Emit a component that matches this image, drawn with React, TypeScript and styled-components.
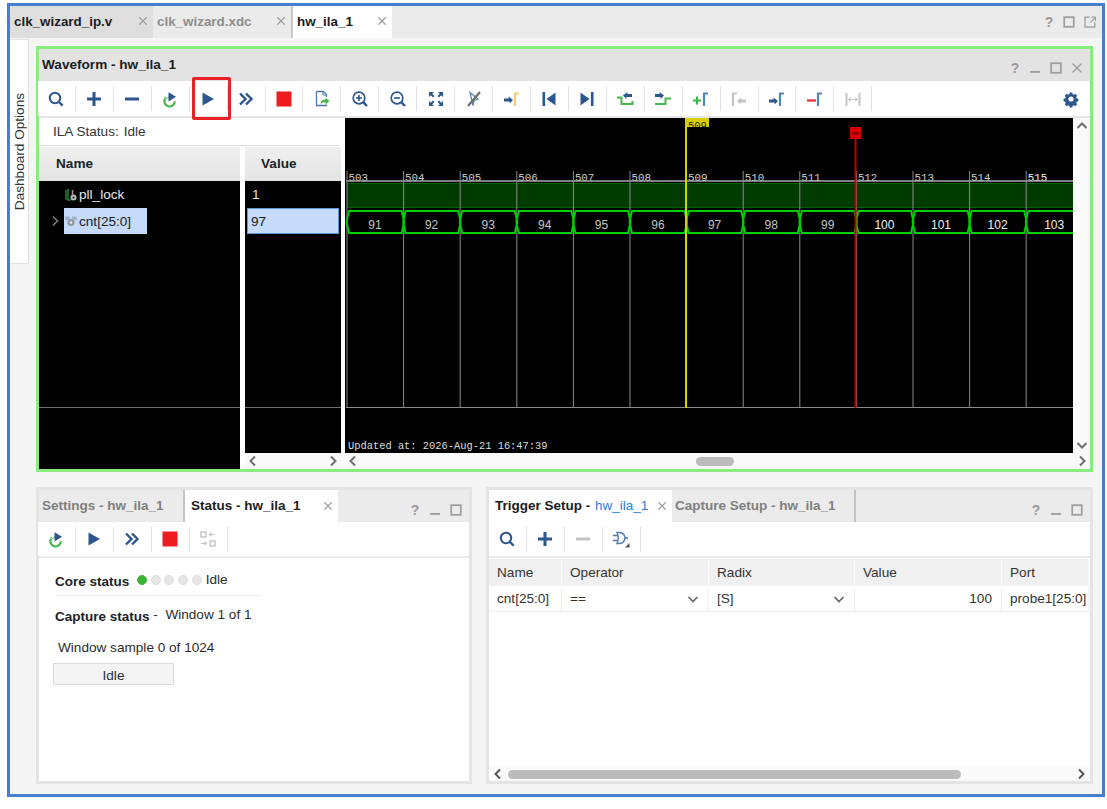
import React from "react";
import styled, { createGlobalStyle } from "styled-components";

const Global = createGlobalStyle`
  html, body { margin: 0; padding: 0; background: #fff; }
  body { font-family: "Liberation Sans", Arial, sans-serif; font-size: 13.6px; color: #2b2b2b; }
  * { box-sizing: border-box; }
`;

const BLUE = "#2b568f";
const GREEN = "#45b649";
const GREY = "#c4c4c4";
const MID = "#4f87b8";

const Frame = styled.div`
  margin: 3px 0 0 7px;
  width: 1098px;
  height: 794px;
  border: 3px solid #4a7dd0;
  background: #f5f5f5;
  display: flex;
  flex-direction: column;
`;
const TabBar = styled.div`
  height: 32px;
  background: #ebebeb;
  display: flex;
  align-items: stretch;
  flex: none;
`;
const DocTab = styled.div<{ $w: number; $state: "dim" | "muted" | "active" }>`
  width: ${(p) => p.$w}px;
  display: flex;
  align-items: center;
  padding: 0 5px 2px 4px;
  justify-content: space-between;
  font-weight: bold;
  font-size: 13.4px;
  background: ${(p) => (p.$state === "active" ? "#fff" : p.$state === "dim" ? "#dedede" : "#ebebeb")};
  color: ${(p) => (p.$state === "muted" ? "#8d8d8d" : "#1c1c1c")};
  border-left: ${(p) => (p.$state === "active" ? "2px solid #c9c9c9" : "0")};
`;
const Spring = styled.div`
  flex: 1;
`;
const WinGroup = styled.div<{ $gap: number; $pad: number; $top?: number }>`
  display: flex;
  align-items: center;
  gap: ${(p) => p.$gap}px;
  padding-right: ${(p) => p.$pad}px;
  padding-top: ${(p) => p.$top ?? 0}px;
`;
const Help = styled.span`
  color: #9a9a9a;
  font-weight: bold;
  font-size: 14px;
  width: 10px;
  text-align: center;
`;
const Body = styled.div`
  flex: 1;
  display: flex;
  min-height: 0;
`;
const Rail = styled.div`
  width: 19px;
  padding-top: 1px;
  flex: none;
`;
const RailTab = styled.div`
  height: 225px;
  background: #fff;
  border: 1px solid #e2e2e2;
  border-left: 0;
  display: flex;
  align-items: center;
  justify-content: center;
  padding-left: 1px;
`;
const RailText = styled.span`
  writing-mode: vertical-rl;
  transform: rotate(180deg);
  font-size: 13.6px;
  color: #333;
  white-space: nowrap;
`;
const Work = styled.div`
  flex: 1;
  padding: 8px 9px 0 7px;
  display: flex;
  flex-direction: column;
  gap: 15px;
`;
const WavePanel = styled.section`
  height: 426px;
  border: 3px solid #88ec7e;
  background: #e6e6e6;
  display: flex;
  flex-direction: column;
  flex: none;
`;
const PanelHead = styled.header`
  height: 32px;
  background: #e3e3e3;
  display: flex;
  align-items: center;
  justify-content: space-between;
  padding: 0 0 0 3px;
  flex: none;
`;
const PanelTitle = styled.h2`
  margin: 0 0 2px;
  font-size: 13.6px;
  font-weight: bold;
  color: #1c1c1c;
`;
const Toolbar = styled.div<{ $shift?: boolean; $h?: number }>`
  height: ${(p) => p.$h ?? 35}px;
  background: #fff;
  display: flex;
  align-items: center;
  flex: none;
  margin-left: ${(p) => (p.$shift ? -1 : 0)}px;
`;
const ToolCell = styled.div<{ $mark?: boolean; $open?: boolean }>`
  position: relative;
  width: 37.93px;
  height: 25px;
  display: flex;
  align-items: center;
  justify-content: center;
  flex: none;
  border-right: ${(p) => (p.$open ? "0" : "1px solid #e2e2e2")};
  ${(p) =>
    p.$mark
      ? `&::after {
          content: "";
          box-sizing: border-box;
          position: absolute;
          left: 2px;
          top: -9px;
          width: 39px;
          height: 43px;
          border: 3px solid #ea2127;
          border-radius: 2px;
        }`
      : ""}
`;
const ToolSpring = styled.div`
  flex: 1;
`;
const GearSlot = styled.div`
  padding-right: 10px;
  display: flex;
`;
const WaveContent = styled.div`
  flex: 1;
  margin-top: 2px;
  display: flex;
  background: #fff;
  min-height: 0;
`;
const LeftSide = styled.div`
  width: 302px;
  display: flex;
  flex-direction: column;
  flex: none;
  gap: 2px;
`;
const IlaRow = styled.div`
  height: 27px;
  padding-left: 14px;
  display: flex;
  align-items: center;
  gap: 5px;
  font-size: 13.6px;
  color: #333;
  flex: none;
  margin-right: 2px;
  box-shadow: 0 1px 0 #e0e0e0;
`;
const Columns = styled.div`
  flex: 1;
  display: flex;
  gap: 5px;
  min-height: 0;
`;
const NameCol = styled.div`
  width: 201px;
  display: flex;
  flex-direction: column;
`;
const ValueCol = styled.div`
  width: 96px;
  display: flex;
  flex-direction: column;
`;
const ColHead = styled.div<{ $pad: number }>`
  height: 34px;
  flex: none;
  background: linear-gradient(#efefef, #e3e3e3);
  display: flex;
  align-items: center;
  padding: 0 0 1px ${(p) => p.$pad}px;
  font-weight: bold;
  font-size: 13.6px;
  color: #222;
`;
const BlackBody = styled.div`
  flex: 1;
  background: #000;
  display: flex;
  flex-direction: column;
  min-height: 0;
`;
const SigRow = styled.div<{ $h: number }>`
  height: ${(p) => p.$h}px;
  display: flex;
  align-items: center;
  color: #e8e8e8;
  font-size: 13.6px;
  flex: none;
`;
const Caret = styled.span`
  width: 25px;
  display: flex;
  justify-content: flex-end;
  padding-right: 3px;
  flex: none;
`;
const SigCell = styled.span<{ $sel?: boolean }>`
  display: flex;
  align-items: center;
  gap: 0;
  height: 26px;
  width: 83px;
  background: ${(p) => (p.$sel ? "#c6dbfa" : "transparent")};
  color: ${(p) => (p.$sel ? "#1a1a1a" : "#e8e8e8")};
`;
const ValCell = styled.span<{ $sel?: boolean }>`
  display: flex;
  align-items: center;
  margin-left: 2px;
  width: 92px;
  height: 26px;
  padding-left: ${(p) => (p.$sel ? 3 : 5)}px;
  background: ${(p) => (p.$sel ? "#c6dbfa" : "transparent")};
  border: ${(p) => (p.$sel ? "1px solid #5b9bd5" : "0")};
  color: ${(p) => (p.$sel ? "#1a1a1a" : "#e8e8e8")};
`;
const Rule = styled.div<{ $mt: number }>`
  height: 1px;
  background: #6e6e6e;
  margin-top: ${(p) => p.$mt}px;
  flex: none;
`;
const HScroll = styled.div<{ $h?: number; $pad?: string }>`
  height: ${(p) => p.$h ?? 16}px;
  flex: none;
  background: #fafafa;
  display: flex;
  align-items: center;
  padding: ${(p) => p.$pad ?? "0 2px"};
`;
const Thumb = styled.div<{ $w: number; $ml: number; $h?: number }>`
  width: ${(p) => p.$w}px;
  height: ${(p) => p.$h ?? 9}px;
  margin-left: ${(p) => p.$ml}px;
  background: #bcbcbc;
  border-radius: 5px;
`;
const RightPush = styled.div`
  margin-left: auto;
  display: flex;
`;
const WaveSide = styled.div`
  flex: 1;
  margin-left: 4px;
  display: flex;
  flex-direction: column;
  min-width: 0;
`;
const WaveTop = styled.div`
  height: 335px;
  display: flex;
  flex: none;
`;
const Canvas = styled.svg`
  width: 728px;
  height: 335px;
  display: block;
  flex: none;
`;
const VScroll = styled.div`
  flex: 1;
  background: #fafafa;
  display: flex;
  flex-direction: column;
  justify-content: space-between;
  align-items: center;
  padding: 2px 0;
`;
const BottomRow = styled.div`
  height: 297px;
  display: flex;
  gap: 14px;
  flex: none;
`;
const Dock = styled.section<{ $w: number }>`
  width: ${(p) => p.$w}px;
  border: 3px solid #e4e4e4;
  background: #ebebeb;
  display: flex;
  flex-direction: column;
  flex: none;
`;
const DockTabs = styled.div`
  height: 32px;
  display: flex;
  align-items: stretch;
  flex: none;
`;
const DockTab = styled.div<{ $w: number; $active?: boolean; $rule?: boolean }>`
  width: ${(p) => p.$w}px;
  display: flex;
  align-items: center;
  padding: 0 5px 2px ${(p) => (p.$active ? 6 : 3)}px;
  gap: 4px;
  font-weight: bold;
  font-size: 13.5px;
  white-space: nowrap;
  background: ${(p) => (p.$active ? "#fff" : "#ebebeb")};
  color: ${(p) => (p.$active ? "#1c1c1c" : "#7f7f7f")};
  border-right: ${(p) => (p.$rule ? "2px solid #c4c4c4" : "0")};
  flex: none;
`;
const TabLink = styled.span`
  color: #2a7de1;
  font-weight: normal;
  margin-left: 1px;
`;
const TabClose = styled.span`
  margin-left: auto;
  display: flex;
  padding-top: 2px;
`;
const DockBody = styled.div`
  flex: 1;
  background: #fff;
  margin-top: 2px;
  min-height: 0;
  display: flex;
  flex-direction: column;
`;
const StatusBody = styled(DockBody)`
  padding: 12px 0 0 16px;
`;
const StatusLine = styled.div`
  display: flex;
  align-items: center;
  height: 19px;
  font-size: 13.6px;
`;
const StrongLabel = styled.b`
  font-size: 13.5px;
  padding-top: 3px;
  color: #222;
`;
const Dots = styled.span`
  display: flex;
  gap: 3.6px;
  margin: 0 4px 0 8px;
`;
const Dot = styled.i<{ $on?: boolean }>`
  width: 10px;
  height: 10px;
  border-radius: 50%;
  background: ${(p) => (p.$on ? "#3cb43c" : "#e6e6e6")};
  border: 1px solid ${(p) => (p.$on ? "#3cb43c" : "#dcdcdc")};
`;
const ThinRule = styled.div`
  width: 205px;
  height: 1px;
  background: #ebebeb;
  margin: 6px 0 0 1px;
`;
const CaptureLine = styled(StatusLine)`
  margin-top: 9px;
`;
const SampleLine = styled.div`
  margin: 16px 0 0 3px;
  font-size: 13.6px;
`;
const IdleButton = styled.div`
  width: 121px;
  height: 22px;
  margin: 8px 0 0 -2px;
  background: #f4f4f4;
  border: 1px solid #dcdcdc;
  display: flex;
  align-items: center;
  justify-content: center;
  padding-top: 3px;
  font-size: 13.6px;
`;
const GridTable = styled.div`
  display: grid;
  grid-template-columns: 73px 147px 146px 147px 87px;
  margin-top: 1px;
  flex: none;
`;
const Th = styled.div`
  height: 27px;
  background: #f0f0f0;
  border-right: 1px solid #fafafa;
  padding: 0 0 0 8px;
  display: flex;
  align-items: center;
  font-size: 13.6px;
  color: #333;
`;
const Td = styled.div<{ $right?: boolean }>`
  height: 26px;
  border-right: 1px solid #f0f0f0;
  border-bottom: 1px solid #efefef;
  padding: 0 9px 0 8px;
  display: flex;
  align-items: center;
  justify-content: ${(p) => (p.$right ? "flex-end" : "space-between")};
  font-size: 13.6px;
  color: #333;
  white-space: nowrap;
`;
const TableFill = styled.div`
  flex: 1;
`;

const Svg = styled.svg`
  display: block;
  flex: none;
`;

const Ic = ({ s = 18, children }: { s?: number; children: React.ReactNode }) => (
  <Svg width={s} height={s} viewBox="0 0 18 18" fill="none">
    {children}
  </Svg>
);

const Search = () => (
  <Ic>
    <circle cx="8" cy="8" r="5.2" stroke={BLUE} strokeWidth="2" />
    <path d="M12 12l3.6 3.6" stroke={BLUE} strokeWidth="2.4" />
  </Ic>
);
const Plus = ({ c = BLUE }: { c?: string }) => (
  <Ic>
    <path d="M9 2v14M2 9h14" stroke={c} strokeWidth="3" />
  </Ic>
);
const Minus = ({ c = BLUE }: { c?: string }) => (
  <Ic>
    <path d="M2 9h14" stroke={c} strokeWidth="3" />
  </Ic>
);
const Refresh = () => (
  <Ic>
    <path d="M4.2 8.5a5.2 5.2 0 1 0 9.6 2.7" stroke={GREEN} strokeWidth="2.2" />
    <path d="M3.4 7l2.8 1.6L8 6.4" stroke={GREEN} strokeWidth="1" />
    <path d="M7.5 2.2l7.5 4.6-7.5 4.6z" fill={BLUE} />
  </Ic>
);
const Play = () => (
  <Ic>
    <path d="M3.5 2.5l11.5 6.5-11.5 6.5z" fill={BLUE} />
  </Ic>
);
const Forward = () => (
  <Ic>
    <path d="M3 3.5l5.5 5.5L3 14.5M9 3.5l5.5 5.5L9 14.5" stroke={BLUE} strokeWidth="2.4" />
  </Ic>
);
const Stop = () => (
  <Ic>
    <rect x="1.5" y="1.5" width="15" height="15" fill="#ee1c1f" />
  </Ic>
);
const ExportDoc = () => (
  <Ic>
    <path d="M3.5 1.5h7l3 3v2.5M13.5 14.5v1h-10v-14" stroke="#4f78ad" strokeWidth="1.3" />
    <path d="M10 1.5v3.5h3.5" stroke="#4f78ad" strokeWidth="1" />
    <path d="M7.5 14c.3-3 2-4.4 5-4.4V7.5l4 3.6-4 3.4v-2.2c-2 0-3.5.6-5 1.7z" fill={GREEN} />
  </Ic>
);
const ZoomIn = ({ minus }: { minus?: boolean }) => (
  <Ic>
    <circle cx="8" cy="8" r="5.8" stroke={BLUE} strokeWidth="1.7" />
    <path d="M12.4 12.4l3.6 3.6" stroke={BLUE} strokeWidth="2.4" />
    <path d={minus ? "M5 8h6" : "M5 8h6M8 5v6"} stroke={BLUE} strokeWidth="1.6" />
  </Ic>
);
const Fit = () => (
  <Ic>
    <path d="M2 2h5L5.2 3.8 7.5 6 6 7.5 3.8 5.2 2 7z" fill={BLUE} />
    <path d="M16 2h-5l1.8 1.8L10.5 6 12 7.5l2.2-2.3L16 7z" fill={BLUE} />
    <path d="M2 16h5l-1.8-1.8L7.5 12 6 10.5l-2.2 2.3L2 11z" fill={BLUE} />
    <path d="M16 16h-5l1.8-1.8-2.3-2.2 1.5-1.5 2.2 2.3L16 11z" fill={BLUE} />
  </Ic>
);
const CrossOut = () => (
  <Ic>
    <path d="M5 2.5l8 6.5-4 1.5-1 5z" stroke="#5c83b4" strokeWidth="1.3" />
    <path d="M15 2L3 16" stroke="#6b6b6b" strokeWidth="2.2" />
  </Ic>
);
const Bracket = ({ c, x = 12 }: { c: string; x?: number }) => (
  <path d={`M${x} 16V3.5h4`} stroke={c} strokeWidth="2.2" />
);
const ArrowRight = ({ y = 10, x = 1, c = BLUE }: { y?: number; x?: number; c?: string }) => (
  <path d={`M${x} ${y - 1.6}h4.6V${y - 3.6}L${x + 9} ${y}l-3.4 3.6v-2H${x}z`} fill={c} />
);
const ArrowLeft = ({ y = 10, x = 1, c = BLUE }: { y?: number; x?: number; c?: string }) => (
  <path d={`M${x + 9} ${y - 1.6}H${x + 4.4}V${y - 3.6}L${x} ${y}l3.4 3.6v-2H${x + 9}z`} fill={c} />
);
const MarkY = () => (
  <Ic>
    <ArrowRight />
    <Bracket c="#f2cf6b" />
  </Ic>
);
const First = () => (
  <Ic>
    <rect x="2.5" y="2" width="2.6" height="14" fill={BLUE} />
    <path d="M15.5 2.5v13L6.5 9z" fill={BLUE} />
  </Ic>
);
const Last = () => (
  <Ic>
    <rect x="12.9" y="2" width="2.6" height="14" fill={BLUE} />
    <path d="M2.5 2.5v13L11.5 9z" fill={BLUE} />
  </Ic>
);
const StepBack = () => (
  <Ic>
    <path d="M1 7.5h4.5V14h11V11" stroke={GREEN} strokeWidth="2" />
    <ArrowLeft x={7} y={5.5} />
  </Ic>
);
const StepFwd = () => (
  <Ic>
    <path d="M1 14h10.5V8.5H17" stroke={GREEN} strokeWidth="2" />
    <ArrowRight x={1} y={5.5} />
  </Ic>
);
const AddMark = () => (
  <Ic>
    <path d="M1 10.5h8M5 6.5v8" stroke={GREEN} strokeWidth="2.2" />
    <Bracket c={MID} />
  </Ic>
);
const GreyMark = () => (
  <Ic>
    <path d="M3 16V3.5h4" stroke={GREY} strokeWidth="2.2" />
    <ArrowLeft x={7} y={11} c={GREY} />
  </Ic>
);
const BlueMark = () => (
  <Ic>
    <ArrowRight y={11} />
    <Bracket c={MID} />
  </Ic>
);
const RedMark = () => (
  <Ic>
    <path d="M1 10.5h9" stroke="#ee2b2f" strokeWidth="2.2" />
    <Bracket c={MID} />
  </Ic>
);
const Span = () => (
  <Ic>
    <path d="M2.5 3v13M15.5 3v13" stroke={GREY} strokeWidth="2" />
    <path d="M4.5 9.5h9M7 7.5l-2.5 2 2.5 2M11 7.5l2.5 2-2.5 2" stroke={GREY} strokeWidth="1" />
  </Ic>
);
const Gear = () => (
  <Ic>
    <path
      d="M7.4 1.5h3.2l.4 2 1.3.6 1.8-1 2.2 2.3-1.1 1.7.6 1.4 2 .4v3.2l-2 .4-.6 1.3 1.1 1.8-2.2 2.2-1.8-1.1-1.3.6-.4 2H7.4l-.4-2-1.3-.6-1.8 1.1-2.2-2.2 1.1-1.8-.6-1.3-2-.4V8.9l2-.4.6-1.4-1.1-1.7L3.9 3.1l1.8 1 1.3-.6z"
      fill={BLUE}
      transform="translate(1.4 1.2) scale(.84)"
    />
    <circle cx="9" cy="9" r="2.6" fill="#fff" />
  </Ic>
);
const Swap = () => (
  <Ic>
    <rect x="2" y="2" width="5" height="5" stroke={GREY} strokeWidth="1.4" />
    <rect x="11" y="11" width="5" height="5" stroke={GREY} strokeWidth="1.4" />
    <path d="M16 4.5h-5M12.5 2.7L10.6 4.5l1.9 1.8M2 13.5h5M5.5 11.7l1.9 1.8-1.9 1.8" stroke={GREY} strokeWidth="1.2" />
  </Ic>
);
const Gate = () => (
  <Ic>
    <path d="M5 2.5h2.5c3.5 0 5.5 3 5.5 5.5s-2 5.5-5.5 5.5H5c1.6-3.6 1.6-7.4 0-11z" stroke="#4f78ad" strokeWidth="1.4" />
    <path d="M1 5.5h4.6M1 10.5h4.6M13 8h3" stroke="#4f78ad" strokeWidth="1.4" />
    <path d="M17.5 13v4.5H13z" fill="#555" />
  </Ic>
);

const WinMin = () => (
  <Svg width="12" height="12" viewBox="0 0 12 12">
    <rect x="1" y="9" width="10" height="1.8" fill="#9d9d9d" />
  </Svg>
);
const WinMax = () => (
  <Svg width="12" height="12" viewBox="0 0 12 12" fill="none">
    <rect x="1.2" y="1.2" width="9.6" height="9.6" stroke="#9d9d9d" strokeWidth="1.7" />
  </Svg>
);
const WinClose = ({ s = 12 }: { s?: number }) => (
  <Svg width={s} height={s} viewBox="0 0 12 12" fill="none">
    <path d="M1.5 1.5l9 9M10.5 1.5l-9 9" stroke="#9d9d9d" strokeWidth="1.4" />
  </Svg>
);
const WinPop = () => (
  <Svg width="12" height="12" viewBox="0 0 12 12" fill="none">
    <path d="M5.5 1.2H1v9.8h9.8V6.5" stroke="#a6a6a6" strokeWidth="1.5" />
    <path d="M6.5 6.5L11 2M7.5 1.2H11.5V5" stroke="#a6a6a6" strokeWidth="1.2" />
  </Svg>
);
const Chev = ({ d, c = "#6e6e6e", s = 12, w = 2 }: { d: "l" | "r" | "u" | "dn"; c?: string; s?: number; w?: number }) => {
  const paths = { l: "M8 1.5L3.5 6 8 10.5", r: "M4 1.5L8.5 6 4 10.5", u: "M1.5 8L6 3.5 10.5 8", dn: "M1.5 4L6 8.5 10.5 4" };
  return (
    <Svg width={s} height={s} viewBox="0 0 12 12" fill="none">
      <path d={paths[d]} stroke={c} strokeWidth={w} />
    </Svg>
  );
};
const PinIcon = () => (
  <Svg width="15" height="14" viewBox="0 0 15 14" fill="none">
    <path d="M2 2v10M5 2h-1v10h3" stroke="#2f8f3e" strokeWidth="1.3" />
    <path d="M8.5 2v5" stroke="#9a9a9a" strokeWidth="1.5" />
    <circle cx="9.5" cy="9.5" r="3" fill="#b5b5b5" />
    <circle cx="9.5" cy="9.5" r="1" fill="#222" />
  </Svg>
);
const BusIcon = () => (
  <Svg width="15" height="14" viewBox="0 0 15 14" fill="none">
    <path d="M1 2.5h5v3.5H1zM8 2.5h5v3.5H8z" fill="#9fb7c4" />
    <circle cx="7" cy="8.5" r="3.6" fill="#8f9a9f" />
    <circle cx="7" cy="8.5" r="1.2" fill="#e8eef5" />
  </Svg>
);

const mainTools: { key: string; node: React.ReactNode; mark?: boolean }[] = [
  { key: "search", node: <Search /> },
  { key: "plus", node: <Plus /> },
  { key: "minus", node: <Minus /> },
  { key: "refresh", node: <Refresh /> },
  { key: "play", node: <Play />, mark: true },
  { key: "forward", node: <Forward /> },
  { key: "stop", node: <Stop /> },
  { key: "export", node: <ExportDoc /> },
  { key: "zin", node: <ZoomIn /> },
  { key: "zout", node: <ZoomIn minus /> },
  { key: "fit", node: <Fit /> },
  { key: "cross", node: <CrossOut /> },
  { key: "marky", node: <MarkY /> },
  { key: "first", node: <First /> },
  { key: "last", node: <Last /> },
  { key: "sback", node: <StepBack /> },
  { key: "sfwd", node: <StepFwd /> },
  { key: "add", node: <AddMark /> },
  { key: "greym", node: <GreyMark /> },
  { key: "bluem", node: <BlueMark /> },
  { key: "redm", node: <RedMark /> },
  { key: "span", node: <Span /> },
];

const ticks = Array.from({ length: 13 }, (_, i) => ({ n: 503 + i, x: 347 + i * 56.6 }));
const busValues = [91, 92, 93, 94, 95, 96, 97, 98, 99, 100, 101, 102, 103];
const monoFont = '"Liberation Mono", monospace';
const sansFont = '"Liberation Sans", Arial, sans-serif';

const Wave = () => (
  <Canvas viewBox="345 118 728 335">
    <rect x="345" y="118" width="728" height="335" fill="#000" />
    {ticks.map((t) => (
      <text key={t.n} x={t.x + 1.5} y="181" fill={t.n === 515 ? "#f4f4f4" : "#cfcfcf"} fontSize="10.8" fontFamily={monoFont}>
        {t.n}
      </text>
    ))}
    <rect x="347" y="183" width="726" height="25" fill="#003c00" />
    <path d="M347 183.5h726M347 207.5h726" stroke="#005f00" strokeWidth="1" />
    <path d="M346 181h727" stroke="#a8a8a8" strokeWidth="1.4" />
    {ticks.map((t) => (
      <path key={t.n} d={`M${t.x} 171V408`} stroke="#8a8a8a" strokeWidth="1" />
    ))}
    {busValues.map((v, i) => {
      const a = 347 + i * 56.6;
      const b = Math.min(a + 56.6, 1075);
      const last = i === busValues.length - 1;
      const d = last
        ? `M1075 211H${a + 2}L${a - 0.5} 222L${a + 2} 233H1075`
        : `M${a + 2} 211H${b - 2}L${b + 0.5} 222L${b - 2} 233H${a + 2}L${a - 0.5} 222Z`;
      return (
        <g key={v}>
          <path d={d} stroke="#00cf00" strokeWidth="1.9" fill="none" />
          <text x={a + 28} y="229" fill={v >= 100 ? "#f0f0f0" : "#c4c4c4"} fontSize="12" textAnchor="middle" fontFamily={sansFont}>
            {v}
          </text>
        </g>
      );
    })}
    <path d="M346 407.5h727" stroke="#8a8a8a" strokeWidth="1" />
    <path d="M686 118V408" stroke="#d8cf00" strokeWidth="2" />
    <rect x="686" y="118" width="23" height="9" fill="#d8cf00" />
    <svg x="686" y="118" width="23" height="9" viewBox="686 118 23 9">
      <text x="688" y="129" fontSize="10.4" fill="#222" fontFamily={monoFont}>
        509
      </text>
    </svg>
    <path d="M855.5 139V408" stroke="#c00000" strokeWidth="2" />
    <rect x="850" y="127" width="11" height="12" fill="#d80000" />
    <path d="M853 133h5M853 133v2M858 133v2" stroke="#300" strokeWidth="1" />
    <text x="348" y="449" fontSize="10.4" fill="#dedede" fontFamily={monoFont}>
      Updated at: 2026-Aug-21 16:47:39
    </text>
  </Canvas>
);

export default function App() {
  return (
    <>
      <Global />
      <Frame>
        <TabBar>
          <DocTab $w={143} $state="dim">
            clk_wizard_ip.v
            <WinClose s={10} />
          </DocTab>
          <DocTab $w={138} $state="muted">
            clk_wizard.xdc
            <WinClose s={10} />
          </DocTab>
          <DocTab $w={101} $state="active">
            hw_ila_1
            <WinClose s={10} />
          </DocTab>
          <Spring />
          <WinGroup $gap={9} $pad={6}>
            <Help>?</Help>
            <WinMax />
            <WinPop />
          </WinGroup>
        </TabBar>
        <Body>
          <Rail>
            <RailTab>
              <RailText>Dashboard Options</RailText>
            </RailTab>
          </Rail>
          <Work>
            <WavePanel>
              <PanelHead>
                <PanelTitle>Waveform - hw_ila_1</PanelTitle>
                <WinGroup $gap={9} $pad={7} $top={6}>
                  <Help>?</Help>
                  <WinMin />
                  <WinMax />
                  <WinClose />
                </WinGroup>
              </PanelHead>
              <Toolbar $shift>
                {mainTools.map((t) => (
                  <ToolCell key={t.key} $mark={t.mark}>
                    {t.node}
                  </ToolCell>
                ))}
                <ToolSpring />
                <GearSlot>
                  <Gear />
                </GearSlot>
              </Toolbar>
              <WaveContent>
                <LeftSide>
                  <IlaRow>
                    <span>ILA Status:</span>
                    <span>Idle</span>
                  </IlaRow>
                  <Columns>
                    <NameCol>
                      <ColHead $pad={17}>Name</ColHead>
                      <BlackBody>
                        <SigRow $h={27}>
                          <Caret />
                          <SigCell>
                            <PinIcon />
                            pll_lock
                          </SigCell>
                        </SigRow>
                        <SigRow $h={26}>
                          <Caret>
                            <Chev d="r" c="#8a8a8a" w={1.3} />
                          </Caret>
                          <SigCell $sel>
                            <BusIcon />
                            cnt[25:0]
                          </SigCell>
                        </SigRow>
                        <Rule $mt={173} />
                      </BlackBody>
                    </NameCol>
                    <ValueCol>
                      <ColHead $pad={16}>Value</ColHead>
                      <BlackBody>
                        <SigRow $h={27}>
                          <ValCell>1</ValCell>
                        </SigRow>
                        <SigRow $h={26}>
                          <ValCell $sel>97</ValCell>
                        </SigRow>
                        <Rule $mt={173} />
                      </BlackBody>
                      <HScroll $pad="0 2px">
                        <Chev d="l" />
                        <RightPush>
                          <Chev d="r" />
                        </RightPush>
                      </HScroll>
                    </ValueCol>
                  </Columns>
                </LeftSide>
                <WaveSide>
                  <WaveTop>
                    <Wave />
                    <VScroll>
                      <Chev d="u" />
                      <Chev d="dn" />
                    </VScroll>
                  </WaveTop>
                  <HScroll>
                    <Chev d="l" />
                    <Thumb $w={38} $ml={337} />
                    <RightPush>
                      <Chev d="r" />
                    </RightPush>
                  </HScroll>
                </WaveSide>
              </WaveContent>
            </WavePanel>
            <BottomRow>
              <Dock $w={436}>
                <DockTabs>
                  <DockTab $w={146} $rule>
                    Settings - hw_ila_1
                  </DockTab>
                  <DockTab $w={153} $active>
                    Status - hw_ila_1
                    <TabClose>
                      <WinClose s={10} />
                    </TabClose>
                  </DockTab>
                  <Spring />
                  <WinGroup $gap={9} $pad={7} $top={8}>
                    <Help>?</Help>
                    <WinMin />
                    <WinMax />
                  </WinGroup>
                </DockTabs>
                <Toolbar $shift $h={34}>
                  <ToolCell><Refresh /></ToolCell>
                  <ToolCell><Play /></ToolCell>
                  <ToolCell><Forward /></ToolCell>
                  <ToolCell><Stop /></ToolCell>
                  <ToolCell><Swap /></ToolCell>
                </Toolbar>
                <StatusBody>
                  <StatusLine>
                    <StrongLabel>Core status</StrongLabel>
                    <Dots>
                      <Dot $on />
                      <Dot />
                      <Dot />
                      <Dot />
                      <Dot />
                    </Dots>
                    <span>Idle</span>
                  </StatusLine>
                  <ThinRule />
                  <CaptureLine>
                    <StrongLabel>Capture status</StrongLabel>
                    <span>&nbsp;-&nbsp;&nbsp;Window 1 of 1</span>
                  </CaptureLine>
                  <SampleLine>Window sample 0 of 1024</SampleLine>
                  <IdleButton>Idle</IdleButton>
                </StatusBody>
              </Dock>
              <Dock $w={607}>
                <DockTabs>
                  <DockTab $w={183} $active>
                    <span>
                      Trigger Setup - <TabLink>hw_ila_1</TabLink>
                    </span>
                    <TabClose>
                      <WinClose s={10} />
                    </TabClose>
                  </DockTab>
                  <DockTab $w={184} $rule>
                    Capture Setup - hw_ila_1
                  </DockTab>
                  <Spring />
                  <WinGroup $gap={9} $pad={7} $top={8}>
                    <Help>?</Help>
                    <WinMin />
                    <WinMax />
                  </WinGroup>
                </DockTabs>
                <Toolbar $h={34}>
                  <ToolCell><Search /></ToolCell>
                  <ToolCell><Plus /></ToolCell>
                  <ToolCell><Minus c={GREY} /></ToolCell>
                  <ToolCell><Gate /></ToolCell>
                </Toolbar>
                <DockBody>
                  <GridTable>
                    <Th>Name</Th>
                    <Th>Operator</Th>
                    <Th>Radix</Th>
                    <Th>Value</Th>
                    <Th>Port</Th>
                    <Td>cnt[25:0]</Td>
                    <Td>
                      ==
                      <Chev d="dn" c="#666" w={1.7} />
                    </Td>
                    <Td>
                      [S]
                      <Chev d="dn" c="#666" w={1.7} />
                    </Td>
                    <Td $right>100</Td>
                    <Td>probe1[25:0]</Td>
                  </GridTable>
                  <TableFill />
                  <HScroll $h={14} $pad="0 3px 0 3px">
                    <Chev d="l" c="#555" />
                    <Thumb $w={453} $ml={4} />
                    <RightPush>
                      <Chev d="r" c="#555" />
                    </RightPush>
                  </HScroll>
                </DockBody>
              </Dock>
            </BottomRow>
          </Work>
        </Body>
      </Frame>
    </>
  );
}
